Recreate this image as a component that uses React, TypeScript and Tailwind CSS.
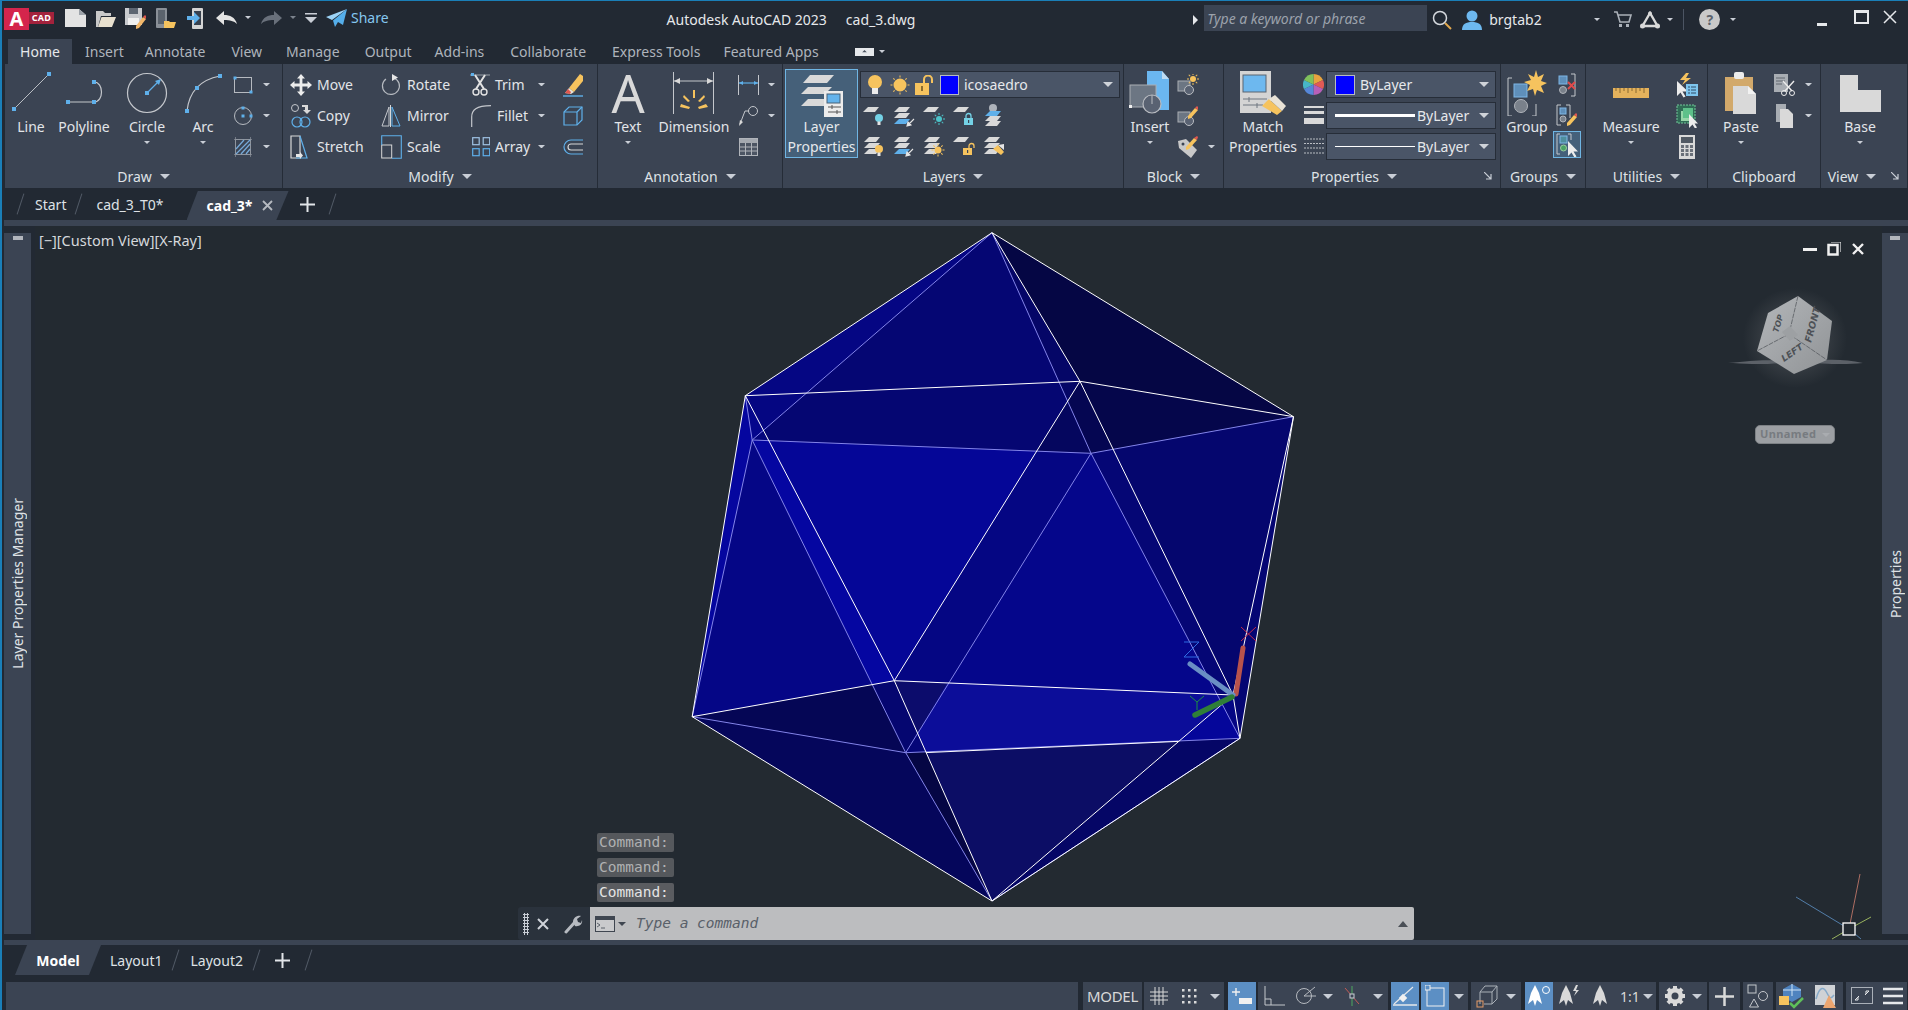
import React from 'react';

const G = '#d9d9d9';
const B = '#5fb0ea';
const Y = '#f6c35e';

type Kids = { children?: React.ReactNode };

const Ico = ({ w, h = w, children, className }: { w: number; h?: number; className?: string } & Kids) => (
  <svg width={w} height={h} viewBox={`0 0 ${w} ${h}`} className={className} fill="none">
    {children}
  </svg>
);

const Caret = ({ c = '#c9ced6', s = 4, className = '' }: { c?: string; s?: number; className?: string }) => (
  <svg width={s * 2} height={s} viewBox="0 0 8 4" preserveAspectRatio="none" className={`shrink-0 ${className}`}>
    <path d="M0 0h8L4 4z" fill={c} />
  </svg>
);

const Handle = ({ x, y, s = 4, c = B }: { x: number; y: number; s?: number; c?: string }) => (
  <rect x={x - s / 2} y={y - s / 2} width={s} height={s} fill={c} />
);

/* ---------- Quick access icons ---------- */
const NewFile = () => (
  <Ico w={21} h={20}>
    <path d="M0 1h14l7 6v12H0z" fill="#e3e3e3" />
    <path d="M14 1v6h7z" fill="#9da3aa" />
  </Ico>
);
const OpenFile = () => (
  <Ico w={21} h={20}>
    <path d="M1 19V3h7l2 2h6v3H6L3 19z" fill="#c9c9c9" />
    <path d="M3 19L6.500 9H21l-4 10z" fill="#e8e0cf" />
  </Ico>
);
const SaveIcon = () => (
  <Ico w={21} h={22}>
    <path d="M0 1h17v17H0z" fill="#c9cbcf" />
    <rect x="4" y="1" width="9" height="6" fill="#5d6672" />
    <rect x="3" y="11" width="11" height="7" fill="#f0f0f0" />
    <path d="M11 19l7-9 3 2-7 9-3 1z" fill="#f2b76a" />
    <path d="M18 10l3 2 0-3-1-1z" fill="#e0574f" />
  </Ico>
);
const PhoneFolder = () => (
  <Ico w={22} h={22}>
    <rect x="1" y="1" width="11" height="20" rx="1" fill="#8a9098" />
    <rect x="3" y="3" width="7" height="14" fill="#5b636d" />
    <path d="M9 14h5l1 1h6l-2 6H9z" fill={Y} />
  </Ico>
);
const PhoneShare = () => (
  <Ico w={20} h={22}>
    <rect x="6" y="1" width="11" height="21" rx="1" fill="#d4d4d4" />
    <rect x="8" y="4" width="7" height="14" fill="#38414e" />
    <path d="M1 9h7V5l6 6-6 6v-4H1z" fill={B} />
  </Ico>
);
const Undo = ({ c = '#e3e3e3' }: { c?: string }) => (
  <Ico w={21} h={14}>
    <path d="M8 0v4c6 0 11 2 13 9-3-3-7-4-13-4v5L0 7z" fill={c} />
  </Ico>
);
const Redo = ({ c = '#69707b' }: { c?: string }) => (
  <Ico w={21} h={14}>
    <path d="M13 0v4C7 4 2 6 0 13c3-3 7-4 13-4v5l8-7z" fill={c} />
  </Ico>
);
const Plane = () => (
  <Ico w={21} h={18}>
    <path d="M21 0L0 8l6 3z" fill="#9cd3f7" />
    <path d="M21 0L7 11.500l2 6.500 3-5 5 3z" fill="#55aeea" />
  </Ico>
);

/* ---------- Ribbon: draw ---------- */
const LineIcon = () => (
  <Ico w={42} h={40}>
    <path d="M3 38L38 3" stroke="#b9bdc3" strokeWidth="1" />
    <Handle x={3} y={38} />
    <Handle x={38} y={3} />
  </Ico>
);
const PolyIcon = () => (
  <Ico w={44} h={32}>
    <path d="M4 28h26M30 8c10 0 10 20 0 20" stroke="#c4c7cc" strokeWidth="1.200" />
    <Handle x={4} y={28} />
    <Handle x={30} y={28} />
    <Handle x={30} y={8} />
  </Ico>
);
const CircleIcon = () => (
  <Ico w={44} h={42}>
    <circle cx="22" cy="21" r="19.500" stroke="#c4c7cc" strokeWidth="1.200" />
    <path d="M22 21L34 9" stroke={B} strokeWidth="1.200" />
    <path d="M36 7l-6 2 4 4z" fill={B} />
    <Handle x={22} y={21} />
  </Ico>
);
const ArcIcon = () => (
  <Ico w={38} h={40}>
    <path d="M3 38C5 20 15 7 36 3" stroke="#c4c7cc" strokeWidth="1.200" />
    <Handle x={3} y={38} />
    <Handle x={13} y={15} />
    <Handle x={36} y={3} />
  </Ico>
);
const RectIcon = () => (
  <Ico w={20} h={18}>
    <rect x="1.500" y="1.500" width="17" height="15" stroke="#b6bac0" />
    <Handle x={2} y={2} s={3} />
    <Handle x={18} y={16} s={3} />
  </Ico>
);
const EllipseIcon = () => (
  <Ico w={20} h={20}>
    <circle cx="10" cy="10" r="8.500" stroke="#b6bac0" />
    <Handle x={10} y={10} s={3} />
    <Handle x={10} y={2} s={3} />
    <Handle x={18} y={10} s={3} />
  </Ico>
);
const HatchIcon = () => (
  <Ico w={20} h={20}>
    <rect x="2.500" y="2.500" width="15" height="15" stroke="#9aa0a8" />
    <path d="M1 2.500h18M1 17.500h18M2.500 0v20M17.500 0v20" stroke="#8b919a" strokeWidth=".7" />
    <path d="M3 12l8-9M3 17l14-14M8 17l9-10M13 17l4-5" stroke="#76a9d8" strokeWidth="1.300" />
  </Ico>
);

/* ---------- Ribbon: modify ---------- */
const MoveIcon = () => (
  <Ico w={22} h={22}>
    <path
      d="M11 0l4 4.500h-2.600v5.100h5.100V7L22 11l-4.500 4v-2.600h-5.100v5.100H15L11 22l-4-4.500h2.600v-5.100H4.500V15L0 11l4.500-4v2.600h5.100V4.500H7z"
      fill="#ececec"
    />
  </Ico>
);
const RotateIcon = () => (
  <Ico w={20} h={22}>
    <path d="M13 4a8.500 8.500 0 1 1-8 1" stroke="#b6bac0" strokeWidth="1.200" />
    <path d="M11 0v7l6-3.500z" fill="#e6e6e6" />
  </Ico>
);
const TrimIcon = () => (
  <Ico w={22} h={24}>
    <path d="M0 2h20" stroke="#9aa0a8" />
    <path d="M5 2l9 14M15 2L6 16" stroke="#e3e3e3" strokeWidth="2" />
    <circle cx="6" cy="19" r="3" stroke="#e3e3e3" strokeWidth="1.400" />
    <circle cx="14" cy="19" r="3" stroke="#e3e3e3" strokeWidth="1.400" />
    <rect x="1" y="0" width="3" height="3" fill={B} />
  </Ico>
);
const EraseIcon = () => (
  <Ico w={20} h={24}>
    <path d="M6 15L17 1l3 2v5l-9 11z" fill={Y} />
    <path d="M2 20l4-5 5 4-3 2z" fill="#e8e2d6" />
    <path d="M2 20l3-4 3 3-1 2z" fill="#e0574f" />
    <path d="M0 23h20" stroke={B} strokeWidth="1.400" />
  </Ico>
);
const CopyIcon = () => (
  <Ico w={22} h={24}>
    <circle cx="5" cy="4" r="3.500" stroke="#c4c7cc" />
    <path d="M12 1h6v5h3l-4 4-4-4h2V3h-3z" fill="#d8d8d8" />
    <circle cx="7" cy="18" r="5" stroke={B} strokeWidth="1.200" />
    <circle cx="15" cy="18" r="5" stroke={B} strokeWidth="1.200" />
  </Ico>
);
const MirrorIcon = () => (
  <Ico w={20} h={22}>
    <path d="M8 2L1 21h7z" stroke="#c4c7cc" />
    <path d="M11 2l8 19h-8z" stroke={B} />
    <path d="M9.500 0v22" stroke="#d8d8d8" />
  </Ico>
);
const FilletIcon = () => (
  <Ico w={20} h={22}>
    <path d="M.7 22V12C.7 5 5 .7 20 .7" stroke="#c4c7cc" strokeWidth="1.200" />
  </Ico>
);
const SolidIcon = () => (
  <Ico w={20} h={22}>
    <path d="M1 7l5-5h13v13l-5 5H1z" stroke={B} strokeWidth="1.200" />
    <path d="M1 7h13v13M14 7l5-5" stroke={B} strokeWidth="1.200" />
  </Ico>
);
const StretchIcon = () => (
  <Ico w={22} h={24}>
    <path d="M1 1h9v22H1z" stroke="#d8d8d8" strokeWidth="1.200" />
    <path d="M10 1l7 22H6" stroke={B} strokeWidth="1.200" />
    <path d="M6 19l4 0 0-2 3 3.500-3 3.500 0-2H6z" fill="#e6e6e6" />
  </Ico>
);
const ScaleIcon = () => (
  <Ico w={21} h={24}>
    <rect x=".7" y="10" width="10" height="13" stroke="#d8d8d8" />
    <path d="M.7 10V.7h19.600v22.600H11" stroke={B} strokeWidth="1.100" />
  </Ico>
);
const ArrayIcon = () => (
  <Ico w={18} h={20}>
    {[0, 10.5].map(x =>
      [0, 11].map(y => <rect key={`${x}${y}`} x={x + 0.7} y={y + 0.7} width="6.500" height="7" stroke={y ? B : '#9fc3e4'} strokeWidth="1.200" />),
    )}
  </Ico>
);
const OffsetIcon = () => (
  <Ico w={20} h={16}>
    <path d="M20 1H8a7 7 0 0 0 0 14h12" stroke={B} strokeWidth="1.200" />
    <path d="M20 5H8a3 3 0 0 0 0 6h12" stroke="#d8d8d8" strokeWidth="1.200" />
  </Ico>
);

/* ---------- Ribbon: annotation ---------- */
const DimensionIcon = () => (
  <Ico w={42} h={42}>
    <path d="M.5 0v42M40.500 0v42" stroke="#c4c7cc" />
    <path d="M1 9h39" stroke="#c4c7cc" />
    <path d="M1 9l6-3v6zM40 9l-6-3v6z" fill="#d8d8d8" />
    <path d="M20 18h2v8h-2zM8 32l9 3-1 2-9-2zM33 32l-8 3 1 2 9-2zM11 23l6 6-2 1-5-5zM31 23l-6 6 2 1 5-5z" fill={Y} />
  </Ico>
);
const LinearIcon = () => (
  <Ico w={21} h={22}>
    <path d="M.5 1v20M20.500 1v20" stroke="#c4c7cc" />
    <path d="M1 9h19" stroke={B} strokeWidth="1.200" />
    <path d="M1 9l4-2v4zM20 9l-4-2v4z" fill={B} />
  </Ico>
);
const LeaderIcon = () => (
  <Ico w={21} h={22}>
    <circle cx="15" cy="6" r="4.500" stroke="#c4c7cc" />
    <path d="M11 6H7L2 19" stroke="#c4c7cc" />
    <path d="M1 21l1-6 3 2z" fill="#d8d8d8" />
  </Ico>
);
const TableIcon = () => (
  <Ico w={19} h={18}>
    <rect x=".5" y=".5" width="18" height="17" stroke="#b0b4ba" fill="#4c5563" />
    <rect x="1" y="1" width="17" height="4" fill="#a4a9b0" />
    <path d="M1 9h17M1 13h17M6.500 5v12M12.500 5v12" stroke="#b0b4ba" />
  </Ico>
);

/* ---------- Ribbon: layers ---------- */
const Sheet = ({ x = 0, y = 0, c = G }: { x?: number; y?: number; c?: string }) => (
  <path d={`M${x + 5} ${y}h11l-4 5H${x}z`} fill={c} />
);
const Stack = ({ top = G, mid = G, bot = G }: { top?: string; mid?: string; bot?: string }) => (
  <>
    <Sheet x={2} y={3} c={top} />
    <Sheet x={2} y={9} c={mid} />
    <Sheet x={2} y={15} c={bot} />
  </>
);
const Bulb = ({ x, y, c, s = 1 }: { x: number; y: number; c: string; s?: number }) => (
  <g transform={`translate(${x} ${y}) scale(${s})`}>
    <circle cx="4" cy="4" r="4" fill={c} />
    <rect x="2.500" y="7.500" width="3" height="3.500" fill="#e3e3e3" />
  </g>
);
const Lock = ({ x, y, c, open }: { x: number; y: number; c: string; open?: boolean }) => (
  <g transform={`translate(${x} ${y})`}>
    <path d={open ? 'M6 5V3a2.500 2.500 0 0 1 5 0v2' : 'M2 5V3a2.500 2.500 0 0 1 5 0v2'} stroke={c} strokeWidth="1.300" />
    <rect x="0" y="5" width="9" height="7" fill={c} />
    <rect x="4" y="7" width="1.200" height="3" fill="#3b4453" />
  </g>
);
const Sun = ({ x, y, r = 4, c = Y }: { x: number; y: number; r?: number; c?: string }) => (
  <g>
    <circle cx={x} cy={y} r={r} fill={c} />
    {[0, 45, 90, 135, 180, 225, 270, 315].map(a => (
      <rect key={a} x={x - 0.5} y={y - r - 3} width="1" height="2" fill={c} transform={`rotate(${a} ${x} ${y})`} />
    ))}
  </g>
);
const SmallArrow = ({ x, y, c = '#e6e6e6' }: { x: number; y: number; c?: string }) => (
  <path d={`M${x} ${y}l7-7M${x} ${y}l1-4 3 3z`} stroke={c} fill={c} strokeWidth="1.100" />
);

const layerIcons: React.ReactNode[] = [
  <><Sheet x={1} y={3} /><Bulb x={13} y={10} c="#74d2e6" /></>,
  <><Stack mid={G} bot={B} /><SmallArrow x={15} y={22} /></>,
  <><Sheet x={1} y={3} /><Sun x={17} y={15} r={3} c="#4cc3c9" /></>,
  <><Sheet x={1} y={3} /><Lock x={12} y={9} c="#74d2e6" /></>,
  <><circle cx="11" cy="4" r="4" fill="#aeb3ba" /><Sheet x={3} y={7} c={B} /><Sheet x={3} y={12} /><Sheet x={3} y={17} /></>,
  <><Stack /><Bulb x={13} y={11} c={Y} /></>,
  <><Stack mid={G} bot={B} /><SmallArrow x={14} y={22} /></>,
  <><Stack /><Sun x={16} y={16} r={3.5} /></>,
  <><Sheet x={1} y={3} /><Lock x={11} y={9} c={Y} open /></>,
  <><Stack /><path d="M11 15l5-4 6 7-3 3z" fill={Y} /><path d="M16 11l6 5 0-6z" fill="#e6e6e6" /></>,
];

const LayerPropsIcon = () => (
  <Ico w={42} h={44}>
    <path d="M9 2h24l-7 8H2z" fill={G} />
    <path d="M7 14h24l-7 7H0z" fill={G} />
    <path d="M7 26h24l-7 7H0z" fill={G} />
    <rect x="23" y="18" width="19" height="26" fill="#ececec" />
    <rect x="26" y="21" width="13" height="9" fill="#63b3ec" stroke="#476176" />
    <path d="M27 34h13M27 39h13" stroke="#555" />
    <path d="M31 32v4M36 37v4" stroke="#555" />
  </Ico>
);

const InsertIcon = () => (
  <Ico w={42} h={44}>
    <path d="M18 0h15l7 8v31H18z" fill="#6bb7f0" />
    <path d="M33 0v8h7z" fill="#bfdcf2" />
    <rect x="1" y="14" width="26" height="22" fill="#6c7683" stroke="#a9adb3" />
    <circle cx="23" cy="33" r="9" fill="#596272" stroke="#b9bcc1" strokeWidth="1.200" />
    <path d="M23 24v9" stroke="#b9bcc1" />
    <rect x="0" y="34" width="3" height="3" fill="#f0f0f0" />
  </Ico>
);
const BlockStar = () => (
  <Ico w={22} h={22}>
    <rect x="1" y="7" width="12" height="10" fill="#6c7683" stroke="#a9adb3" />
    <circle cx="12" cy="16" r="4.500" fill="#596272" stroke="#b9bcc1" />
    <Sun x={16} y={5} r={3} />
  </Ico>
);
const BlockPen = () => (
  <Ico w={22} h={22}>
    <rect x="1" y="7" width="12" height="10" fill="#6c7683" stroke="#a9adb3" />
    <circle cx="12" cy="16" r="4.500" fill="#596272" stroke="#b9bcc1" />
    <path d="M11 11l7-8 3 2-7 8-3 1z" fill={Y} />
    <path d="M18 3l3 2 0-3-1-1z" fill="#e0574f" />
  </Ico>
);
const TagIcon = () => (
  <Ico w={22} h={24}>
    <path d="M1 6l8-2 11 11-6 8L2 13z" fill="#c9c9c9" />
    <circle cx="6" cy="9" r="1.500" fill="#3b4453" />
    <path d="M9 12l8-9 3 2-8 9-3 1z" fill={Y} />
    <path d="M17 3l3 2 1-3-1-1z" fill="#e0574f" />
  </Ico>
);

/* ---------- Ribbon: properties ---------- */
const MatchIcon = () => (
  <Ico w={46} h={44}>
    <rect x="0" y="0" width="31" height="42" fill="#d4d4d4" />
    <rect x="3" y="4" width="23" height="17" fill="#6db8ef" stroke="#5a6470" />
    <path d="M3 28h24M3 34h20" stroke="#6f7680" />
    <path d="M9 26v5M17 32v5" stroke="#6f7680" />
    <path d="M22 35l7-7 13 12-5 4z" fill={Y} />
    <path d="M29 28l6-4 11 11-4 5z" fill="#e8e2d6" />
  </Ico>
);
const Wheel = () => (
  <Ico w={21} h={21}>
    <path d="M10.500 10.500V0A10.500 10.500 0 0 1 20 6z" fill="#e8a33e" />
    <path d="M10.500 10.500L20 6a10.500 10.500 0 0 1 0 9z" fill="#e25a55" />
    <path d="M10.500 10.500L20 15a10.500 10.500 0 0 1-9.500 6z" fill="#b75fb8" />
    <path d="M10.500 10.500V21A10.500 10.500 0 0 1 1 15z" fill="#5687d8" />
    <path d="M10.500 10.500L1 15a10.500 10.500 0 0 1 0-9z" fill="#47b7c8" />
    <path d="M10.500 10.500L1 6a10.500 10.500 0 0 1 9.500-6z" fill="#7fc15c" />
  </Ico>
);
const Weights = () => (
  <Ico w={20} h={20}>
    <rect y="0" width="20" height="2" fill={G} />
    <rect y="5" width="20" height="3" fill={G} />
    <rect y="12" width="20" height="6" fill={G} />
  </Ico>
);
const LineTypes = () => (
  <Ico w={20} h={18}>
    <path d="M0 1h20M0 5.500h20M0 10h20M0 15h20" stroke="#b9bdc3" strokeDasharray="2 1" />
  </Ico>
);

/* ---------- Ribbon: groups / utilities / clipboard ---------- */
const GroupIcon = () => (
  <Ico w={40} h={46}>
    <path d="M5 8H1v38h4M25 46h4V34" stroke="#c4c7cc" />
    <rect x="7" y="14" width="13" height="13" fill="#5f8fba" stroke="#7eb6e6" />
    <circle cx="14" cy="36" r="6.500" fill="#7a818b" stroke="#b0b4ba" />
    <path d="M29 0l2 7 6-3-3 7 6 2-6 3 3 7-7-3-2 6-2-7-6 2 3-6-6-3 7-2-3-6 6 3z" fill={Y} />
  </Ico>
);
const GroupX = () => (
  <Ico w={20} h={24}>
    <path d="M14 1h4v22h-4" stroke="#c4c7cc" />
    <rect x="2" y="3" width="8" height="8" fill="#5f8fba" stroke="#7eb6e6" />
    <circle cx="6" cy="17" r="3.500" fill="#7a818b" stroke="#b0b4ba" />
    <path d="M11 9l7 7M18 9l-7 7" stroke="#e04a4a" strokeWidth="2" />
  </Ico>
);
const GroupPen = () => (
  <Ico w={22} h={24}>
    <path d="M5 1H1v20h4M10 1h4v13" stroke="#c4c7cc" />
    <rect x="4" y="4" width="6" height="6" fill="#5f8fba" stroke="#7eb6e6" />
    <circle cx="7" cy="15" r="3" fill="#7a818b" stroke="#b0b4ba" />
    <path d="M11 19l7-8 3 2-7 8-3 1z" fill={Y} />
    <path d="M18 11l3 2 0-3-1-1z" fill="#e0574f" />
  </Ico>
);
const GroupPick = () => (
  <Ico w={22} h={24}>
    <path d="M4 1H1v20h3M12 1h3v6" stroke="#c4c7cc" />
    <rect x="4" y="3" width="7" height="7" fill="#4f8f9e" stroke="#7eb6e6" />
    <circle cx="7.500" cy="15" r="3" fill="#4aa365" stroke="#9acb9f" />
    <path d="M12 8v15l3.500-3.500 3 5 2-1-3-5H22z" fill="#ececec" />
  </Ico>
);
const RulerIcon = () => (
  <Ico w={36} h={12}>
    <rect y="1" width="36" height="10" fill="#e4b25c" />
    <path d="M3 1v3M7 1v5M11 1v3M15 1v5M19 1v3M23 1v5M27 1v3M31 1v5" stroke="#8a6b30" />
  </Ico>
);
const QuickSelect = () => (
  <Ico w={22} h={26}>
    <path d="M10 1L4 8h5l-3 5 9-7h-5l3-5z" fill={Y} />
    <path d="M1 9v15l3.500-3.500 3 5 2-1-3-5H12z" fill="#ececec" />
    <rect x="10" y="12" width="12" height="12" fill="#7ec6ef" />
    <path d="M12 15h2M15 15h5M12 18h2M15 18h5M12 21h2M15 21h5" stroke="#2f4c66" />
  </Ico>
);
const SelectAll = () => (
  <Ico w={22} h={24}>
    <rect x="1" y="1" width="18" height="18" fill="#2f6b55" stroke="#72c89a" strokeDasharray="2 1" />
    <rect x="5" y="7" width="10" height="10" fill="#97d6a9" />
    <rect x="7" y="4" width="10" height="10" fill="#5ec08a" />
    <path d="M13 10v14l3.500-3.500 2.500 4 2-1-2.500-4H22z" fill="#ececec" />
  </Ico>
);
const CalcIcon = () => (
  <Ico w={16} h={24}>
    <rect width="16" height="24" fill={G} />
    <rect x="2" y="2" width="12" height="6" fill="#515963" />
    {[10, 14, 18].map(y => [2, 6.5, 11].map(x => <rect key={`${x}${y}`} x={x} y={y} width="3" height="3" fill="#6a7079" />))}
  </Ico>
);
const PasteIcon = () => (
  <Ico w={32} h={42}>
    <path d="M0 5h28v34H0z" fill="#d2a96b" />
    <rect x="9" y="0" width="10" height="7" rx="2" fill="#ececec" />
    <path d="M8 14h15l8 8v20H8z" fill={G} />
    <path d="M23 14v8h8z" fill="#f2f2f2" />
  </Ico>
);
const CutIcon = () => (
  <Ico w={22} h={24}>
    <path d="M0 1h14v18H0z" fill="#a8adb3" />
    <path d="M2 5h9M2 8h9M2 11h6" stroke="#60676f" />
    <path d="M9 8l9 10M20 8l-9 10" stroke="#ececec" strokeWidth="1.400" />
    <circle cx="10" cy="20" r="2.500" stroke="#ececec" />
    <circle cx="18" cy="20" r="2.500" stroke="#ececec" />
  </Ico>
);
const CopyClip = () => (
  <Ico w={18} h={24}>
    <path d="M0 0h10v18H0z" fill="#a8adb3" />
    <path d="M4 5h8l5 5v14H4z" fill={G} />
  </Ico>
);
const BaseIcon = () => (
  <Ico w={41} h={37}>
    <path d="M0 0h18v15h23v22H0z" fill={G} />
  </Ico>
);

/* ---------- Ribbon parts ---------- */
const Panel = ({ w, title, launcher, noCaret, shift = '', children }: { w: string; title: string; launcher?: boolean; noCaret?: boolean; shift?: string } & Kids) => (
  <div className={`${w} shrink-0 relative flex flex-col border-r border-[#252c37]`}>
    <div className="h-[101px] pt-[5px] flex">{children}</div>
    <div className={`h-[23px] flex items-center justify-center gap-[8px] text-[14px] text-[#dfe2e6] ${shift}`}>
      <span>{title}</span>
      {!noCaret && <Caret s={5} />}
    </div>
    {launcher && (
      <svg width="8" height="8" viewBox="0 0 8 8" className="absolute right-[8px] bottom-[8px]">
        <path d="M0 0l7 7M7 2v5H2" stroke="#c9ced6" strokeWidth="1.200" fill="none" />
      </svg>
    )}
  </div>
);

const Large = ({ w, icon, label, caret, pt = '' }: { w: string; icon: React.ReactNode; label: React.ReactNode; caret?: boolean; pt?: string }) => (
  <div className={`${w} shrink-0 flex flex-col items-center text-[14px] text-[#e2e5e9] leading-[20px]`}>
    <div className={`h-[48px] flex items-center justify-center ${pt}`}>{icon}</div>
    <div className="text-center whitespace-nowrap">{label}</div>
    {caret && <Caret s={3} className="mt-[4px]" />}
  </div>
);

const Small = ({ icon, caret, className = '' }: { icon: React.ReactNode; caret?: boolean; className?: string }) => (
  <div className={`h-[31px] flex items-center ${className}`}>
    <div className="w-[22px] flex justify-center items-center">{icon}</div>
    {caret && <Caret s={3.5} className="ml-[9px]" />}
  </div>
);

const ToolRow = ({ icon, label, caret, gap = 'ml-[5px]' }: { icon: React.ReactNode; label: string; caret?: boolean; gap?: string }) => (
  <div className="h-[31px] flex items-center text-[14px] text-[#e2e5e9]">
    <div className="w-[22px] flex justify-center">{icon}</div>
    <span className={gap}>{label}</span>
    {caret && <Caret s={3.5} className="ml-auto mr-[17px]" />}
  </div>
);

const Combo = ({ children, w = 'w-[170px]' }: { w?: string } & Kids) => (
  <div className={`${w} h-[27px] flex items-center bg-[#4a5567] border border-[#262d38] pr-[6px] text-[14px] text-[#e6e8eb]`}>
    {children}
    <Caret s={5} c="#cfd3d9" className="ml-auto" />
  </div>
);

const Ribbon = () => (
  <div className="h-[124px] ml-[3px] flex bg-[#3b4453]">
    <Panel w="w-[278px]" title="Draw">
      <Large w="w-[52px]" icon={<LineIcon />} label="Line" pt="pb-[4px] pl-[2px]" />
      <Large w="w-[54px]" icon={<PolyIcon />} label="Polyline" pt="pb-[7px] pl-[3px]" />
      <Large w="w-[72px]" icon={<CircleIcon />} label="Circle" caret />
      <Large w="w-[40px]" icon={<ArcIcon />} label="Arc" caret />
      <div className="ml-[9px]">
        <Small icon={<RectIcon />} caret />
        <Small icon={<EllipseIcon />} caret />
        <Small icon={<HatchIcon />} caret />
      </div>
    </Panel>
    <Panel w="w-[315px]" title="Modify">
      <div className="w-[97px] pl-[7px]">
        <ToolRow icon={<MoveIcon />} label="Move" />
        <ToolRow icon={<CopyIcon />} label="Copy" />
        <ToolRow icon={<StretchIcon />} label="Stretch" />
      </div>
      <div className="w-[90px]">
        <ToolRow icon={<RotateIcon />} label="Rotate" />
        <ToolRow icon={<MirrorIcon />} label="Mirror" />
        <ToolRow icon={<ScaleIcon />} label="Scale" />
      </div>
      <div className="w-[92px]">
        <ToolRow icon={<TrimIcon />} label="Trim" caret gap="ml-[3px]" />
        <ToolRow icon={<FilletIcon />} label="Fillet" caret gap="ml-[5px]" />
        <ToolRow icon={<ArrayIcon />} label="Array" caret gap="ml-[3px]" />
      </div>
      <div>
        <Small icon={<EraseIcon />} />
        <Small icon={<SolidIcon />} />
        <Small icon={<OffsetIcon />} />
      </div>
    </Panel>
    <Panel w="w-[185px]" title="Annotation">
      <Large w="w-[60px]" icon={<span className="text-[52px] leading-[48px] text-[#d9d9d9]">A</span>} label="Text" caret />
      <Large w="w-[72px]" icon={<DimensionIcon />} label="Dimension" />
      <div className="ml-[7px]">
        <Small icon={<LinearIcon />} caret />
        <Small icon={<LeaderIcon />} caret />
        <Small icon={<TableIcon />} />
      </div>
    </Panel>
    <Panel w="w-[341px]" title="Layers">
      <div className="w-[73px] h-[89px] ml-[2px] flex flex-col items-center border border-[#6fb5e3] bg-[#456079] text-[14px] leading-[20px] text-[#e6e9ec]">
        <div className="h-[48px] pt-[2px] flex items-center"><LayerPropsIcon /></div>
        <div className="text-center mt-[-1px]">Layer<br />Properties</div>
      </div>
      <div className="ml-[2px] mt-[2px]">
        <Combo w="w-[260px]">
          <div className="flex items-center ml-[7px]">
            <svg width="14" height="20" viewBox="0 0 14 20"><circle cx="7" cy="7" r="7" fill={Y} /><rect x="4" y="13" width="6" height="6" fill="#ececec" /></svg>
            <Ico w={20} h={22} className="ml-[8px]"><Sun x={10} y={11} r={6.5} /></Ico>
            <Ico w={18} h={20} className="ml-[5px]">
              <path d="M9 8V4.500a4 4 0 0 1 8 0V8" stroke={Y} strokeWidth="2" />
              <rect y="8" width="14" height="12" fill={Y} />
              <rect x="6" y="11" width="2" height="5" fill="#8a6b30" />
            </Ico>
            <div className="w-[17px] h-[18px] ml-[7px] bg-[#0000ff] border border-[#b6bac0] box-content" />
            <span className="ml-[5px]">icosaedro</span>
          </div>
        </Combo>
        <div className="grid grid-cols-5 w-[150px] h-[30px] mt-[3px] ml-[2px] items-center">
          {layerIcons.slice(0, 5).map((n, i) => <Ico key={i} w={24} h={24}>{n}</Ico>)}
        </div>
        <div className="grid grid-cols-5 w-[150px] h-[30px] ml-[2px] items-center">
          {layerIcons.slice(5).map((n, i) => <Ico key={i} w={24} h={24}>{n}</Ico>)}
        </div>
      </div>
    </Panel>
    <Panel w="w-[100px]" title="Block">
      <Large w="w-[52px]" icon={<InsertIcon />} label="Insert" caret />
      <div className="ml-[1px]">
        <Small icon={<BlockStar />} />
        <Small icon={<BlockPen />} />
        <Small icon={<TagIcon />} caret />
      </div>
    </Panel>
    <Panel w="w-[277px]" title="Properties" launcher shift="pr-[16px]">
      <Large w="w-[78px]" icon={<MatchIcon />} label={<>Match<br />Properties</>} />
      <div className="w-[23px]">
        <div className="h-[31px] flex items-center justify-center"><Wheel /></div>
        <div className="h-[31px] flex items-center justify-center"><Weights /></div>
        <div className="h-[31px] flex items-center justify-center"><LineTypes /></div>
      </div>
      <div className="flex flex-col gap-[4px] ml-[1px] mt-[2px]">
        <Combo>
          <div className="w-[18px] h-[18px] ml-[8px] bg-[#0000ff] border border-[#b6bac0] box-content" />
          <span className="ml-[5px]">ByLayer</span>
        </Combo>
        <Combo>
          <div className="w-[80px] h-[3px] ml-[8px] bg-white" />
          <span className="ml-[2px]">ByLayer</span>
        </Combo>
        <Combo>
          <div className="w-[80px] h-px ml-[8px] bg-white" />
          <span className="ml-[2px]">ByLayer</span>
        </Combo>
      </div>
    </Panel>
    <Panel w="w-[85px]" title="Groups">
      <Large w="w-[52px]" icon={<GroupIcon />} label="Group" />
      <div className="ml-[3px]">
        <Small icon={<GroupX />} />
        <Small icon={<GroupPen />} />
        <div className="w-[28px] h-[27px] ml-[-3px] flex items-center justify-center border border-[#6fb5e3] bg-[#45607a]"><GroupPick /></div>
      </div>
    </Panel>
    <Panel w="w-[122px]" title="Utilities">
      <Large w="w-[90px]" icon={<RulerIcon />} label="Measure" caret />
      <div>
        <Small icon={<QuickSelect />} />
        <Small icon={<SelectAll />} />
        <Small icon={<CalcIcon />} />
      </div>
    </Panel>
    <Panel w="w-[113px]" title="Clipboard" noCaret>
      <Large w="w-[66px]" icon={<PasteIcon />} label="Paste" caret />
      <div>
        <Small icon={<CutIcon />} caret />
        <Small icon={<CopyClip />} caret />
      </div>
    </Panel>
    <Panel w="w-[87px]" title="View" launcher shift="pr-[24px]">
      <Large w="w-[78px]" icon={<BaseIcon />} label="Base" caret />
    </Panel>
  </div>
);

/* ---------- Top bars ---------- */
const TitleBar = () => (
  <div className="h-[37px] flex items-center text-[14px]">
    <div className="flex items-center mt-[-4px]">
      <div className="w-[25px] h-[22px] ml-[2px] mt-[2px] bg-[#d4254c] flex items-center justify-center text-white font-bold text-[20px]">A</div>
      <div className="w-[25px] h-[12px] bg-[#a3223c] flex items-center justify-center text-white font-bold text-[9px] tracking-[.3px]">CAD</div>
      <div className="ml-[11px]"><NewFile /></div>
      <div className="ml-[9px]"><OpenFile /></div>
      <div className="ml-[9px]"><SaveIcon /></div>
      <div className="ml-[9px]"><PhoneFolder /></div>
      <div className="ml-[9px]"><PhoneShare /></div>
      <div className="ml-[10px]"><Undo /></div>
      <Caret s={3} className="ml-[8px]" />
      <div className="ml-[10px]"><Redo /></div>
      <Caret s={3} c="#7c838d" className="ml-[8px]" />
      <svg width="12" height="10" viewBox="0 0 12 10" className="ml-[9px]"><path d="M0 0h12v1.500H0zM0 4h12L6 10z" fill="#c9ced6" /></svg>
      <div className="ml-[9px]"><Plane /></div>
      <span className="ml-[4px] text-[#85c7f0]">Share</span>
    </div>
    <span className="ml-[278px] text-[#e6e8eb] whitespace-nowrap">Autodesk AutoCAD 2023</span>
    <span className="ml-[19px] text-[#e6e8eb]">cad_3.dwg</span>
    <svg width="5" height="10" viewBox="0 0 5 10" className="ml-[278px]"><path d="M0 0l5 5-5 5z" fill="#e6e8eb" /></svg>
    <div className="w-[223px] h-[26px] ml-[6px] mt-[-3px] bg-[#3b4453] flex items-center pl-[3px] italic text-[#9ba2ac] text-[14px]">Type a keyword or phrase</div>
    <Ico w={20} h={20} className="ml-[5px]">
      <circle cx="8" cy="8" r="6.500" stroke="#d4d8dd" strokeWidth="1.500" />
      <path d="M13 13l6 6" stroke="#e2a84e" strokeWidth="2" />
    </Ico>
    <Ico w={22} h={20} className="ml-[9px]">
      <circle cx="11" cy="6" r="5.500" fill="#6db8ef" />
      <path d="M1 20c0-6 4-8 10-8s10 2 10 8z" fill="#6db8ef" />
    </Ico>
    <span className="ml-[6px] text-[#e6e8eb] w-[105px]">brgtab2</span>
    <Caret s={3} />
    <Ico w={18} h={18} className="ml-[14px]">
      <path d="M0 1h3l3 10h9l2-7H4" stroke="#aab0b8" strokeWidth="1.600" />
      <rect x="5" y="13" width="3" height="3" fill="#aab0b8" />
      <rect x="12" y="13" width="3" height="3" fill="#aab0b8" />
    </Ico>
    <Ico w={20} h={18} className="ml-[8px]">
      <path d="M10 2L2.500 15h15z" stroke="#d9d9d9" strokeWidth="2.400" />
      <circle cx="10" cy="2.500" r="2" fill="#d9d9d9" />
      <circle cx="2.500" cy="15" r="2.500" fill="#d9d9d9" />
      <circle cx="17.500" cy="15" r="2.500" fill="#d9d9d9" />
    </Ico>
    <Caret s={3} className="ml-[7px]" />
    <div className="w-px h-[21px] ml-[10px] bg-[#4c5563]" />
    <div className="w-[21px] h-[21px] ml-[15px] rounded-full bg-[#c9c9c9] flex items-center justify-center text-[#5c636d] font-bold text-[14px]">?</div>
    <Caret s={3} className="ml-[10px]" />
    <div className="w-[10px] h-[3px] ml-[81px] mt-[9px] bg-[#e6e8eb]" />
    <div className="w-[15px] h-[14px] ml-[27px] mt-[-6px] border-2 border-[#e6e8eb] border-t-[3px]" />
    <Ico w={14} h={14} className="ml-[14px] mt-[-6px]"><path d="M1 1l12 12M13 1L1 13" stroke="#e6e8eb" strokeWidth="1.500" /></Ico>
  </div>
);

const ribbonTabs = [
  ['Insert', 'ml-[13px]'], ['Annotate', 'ml-[21px]'], ['View', 'ml-[26px]'], ['Manage', 'ml-[24px]'], ['Output', 'ml-[25px]'],
  ['Add-ins', 'ml-[23px]'], ['Collaborate', 'ml-[26px]'], ['Express Tools', 'ml-[26px]'], ['Featured Apps', 'ml-[23px]'],
];

const RibbonTabs = () => (
  <div className="h-[26px] flex items-end text-[14px] text-[#aeb4bc]">
    <div className="w-[64px] h-[25px] ml-[6px] bg-[#3b4453] flex items-center justify-center text-[#e6e8eb]">Home</div>
    {ribbonTabs.map(([t, m]) => (
      <div key={t} className={`h-[25px] flex items-center ${m}`}>{t}</div>
    ))}
    <div className="h-[25px] flex items-center ml-[36px]">
      <div className="w-[19px] h-[8px] bg-[#e6e8eb] flex items-center justify-center"><Caret s={2.5} c="#4a5260" className="rotate-180" /></div>
      <Caret s={3} className="ml-[5px]" />
    </div>
  </div>
);

const Slash = ({ className = '' }: { className?: string }) => (
  <div className={`w-px h-[22px] bg-[#525a67] rotate-[18deg] shrink-0 ${className}`} />
);

const PlusIcon = () => (
  <Ico w={15} h={15}><path d="M7.500 0v15M0 7.500h15" stroke="#e2e5e9" strokeWidth="2" /></Ico>
);

const DocTabs = () => (
  <div className="h-[32px] flex items-center text-[14px] text-[#dfe2e6]">
    <Slash className="ml-[18px]" />
    <span className="ml-[14px]">Start</span>
    <Slash className="ml-[12px]" />
    <span className="ml-[17px]">cad_3_T0*</span>
    <div className="w-[102px] h-[29px] ml-[23px] self-end bg-[#3b4453] [clip-path:polygon(11%_0,100%_0,88%_100%,0_100%)] flex items-center pl-[20px] shrink-0">
      <span className="font-bold text-white">cad_3*</span>
      <Ico w={11} h={11} className="ml-[10px]"><path d="M1 1l9 9M10 1l-9 9" stroke="#b6bac0" strokeWidth="1.800" /></Ico>
    </div>
    <div className="ml-[11px]"><PlusIcon /></div>
    <Slash className="ml-[17px]" />
  </div>
);

/* ---------- Model space ---------- */
const P: Record<string, [number, number]> = {
  T: [992, 232.7], A: [745.3, 395.7], B: [1080, 381.3], C: [1293.5, 416.7], D: [752.2, 440], E: [1091, 453.3],
  F: [692.2, 716.7], G: [894.3, 680.7], H: [905.7, 752.7], I: [1240, 738.3], J: [1233, 695], K: [992, 901],
};
const pts = (s: string) => s.split('').map(k => P[k].join(',')).join(' ');

const backFaces: [string, number][] = [
  ['TDE', 120], ['TEC', 85], ['TAD', 167], ['DEH', 225], ['EHI', 250], ['EIC', 185], ['ADF', 220], ['DFH', 150], ['FHK', 165], ['HIK', 100],
];
const frontFaces: [string, number][] = [
  ['TAB', 132], ['TBC', 62], ['ABG', 130], ['BGJ', 90], ['BJC', 75], ['CJI', 85], ['FAG', 150], ['FGK', 52], ['GJK', 118], ['JIK', 120],
];
const backEdges = ['TD', 'TE', 'AD', 'DE', 'EC', 'DF', 'DH', 'EH', 'EI', 'FH', 'HK', 'HI', 'IK'];
const frontEdges = ['TA', 'TB', 'TC', 'AB', 'BC', 'AF', 'AG', 'BG', 'BJ', 'CJ', 'CI', 'FG', 'GJ', 'GK', 'JK', 'JI', 'FK', 'IK'];

const Edge = ({ e, c, w }: { e: string; c: string; w: number }) => (
  <line x1={P[e[0]][0]} y1={P[e[0]][1]} x2={P[e[1]][0]} y2={P[e[1]][1]} stroke={c} strokeWidth={w} />
);

const ModelDrawing = () => (
  <svg viewBox="35 226 1847 714" width="1847" height="714" className="absolute left-0 top-0" fill="none">
    {backFaces.map(([f, b]) => (
      <polygon key={f} points={pts(f)} fill={`rgb(0,0,${b})`} fillOpacity=".7" />
    ))}
    {frontFaces.map(([f, b]) => (
      <polygon key={f} points={pts(f)} fill={`rgb(${f === 'GJK' ? 14 : 0},${f === 'GJK' ? 14 : 0},${b})`} fillOpacity=".5" />
    ))}
    <polygon points="894.3,680.7 947,683.5 917.5,733.5" fill="#0c0c6c" />
    {backEdges.map(e => <Edge key={e} e={e} c="#8384ea" w={1} />)}
    {frontEdges.map(e => <Edge key={e} e={e} c="#ffffff" w={1} />)}
    <line x1="926" y1="752.600" x2="1178" y2="741.400" stroke="#fff" strokeWidth="1" />

    {/* ucs */}
    <path d="M1236 694L1243 648" stroke="#b8534c" strokeWidth="5" strokeLinecap="round" />
    <path d="M1233 695L1190 664" stroke="#6a8fc4" strokeWidth="5" strokeLinecap="round" />
    <path d="M1232 697L1195 715" stroke="#2f7f38" strokeWidth="5.500" strokeLinecap="round" />
    <path d="M1241 627l15 14M1256 627l-15 14" stroke="#c22b4a" />
    <path d="M1184 642h15l-15 15h15" stroke="#2f6be0" />
    <path d="M1190 696l7 6 7-6M1197 702v8" stroke="#1d8f45" />

    {/* view cube */}
    <defs>
      <linearGradient id="cube" x1="0" y1="0" x2="1" y2="1">
        <stop offset="0" stopColor="#b4b7ba" />
        <stop offset="1" stopColor="#909396" />
      </linearGradient>
      <radialGradient id="glow">
        <stop offset="0" stopColor="#6e7175" stopOpacity=".6" />
        <stop offset="1" stopColor="#6e7175" stopOpacity="0" />
      </radialGradient>
    </defs>
    <ellipse cx="1795" cy="338" rx="52" ry="50" fill="url(#glow)" />
    <path d="M1728 363c30-3 40-4 65-1h5c30-3 45-3 65 1-20 2-35 1-65-1-30 2-40 3-65 1z" fill="#5c6168" />
    <polygon points="1798,296 1832,321 1827,360 1794,374 1757,351 1768,313" fill="url(#cube)" />
    <path d="M1798 296l-9 38 38 26M1789 334l-32 17" stroke="#585c61" strokeDasharray="5 1" strokeWidth=".8" />
    <polygon points="1782,332 1790,326 1798,335 1790,341" fill="#9da0a3" />
    <text transform="translate(1778 333) rotate(-72)" className="font-['DejaVu_Sans',sans-serif] font-bold italic" fontSize="8" fill="#4d5156">TOP</text>
    <text transform="translate(1811 343) rotate(-75)" className="font-['DejaVu_Sans',sans-serif] font-bold italic" fontSize="9.500" fill="#4d5156">FRONT</text>
    <text transform="translate(1784 362) rotate(-35)" className="font-['DejaVu_Sans',sans-serif] font-bold italic" fontSize="9" fill="#4d5156">LEFT</text>

    {/* wcs icon */}
    <path d="M1849 929L1796 897" stroke="#5e93c8" strokeWidth=".8" />
    <path d="M1849 929L1860 874" stroke="#d17f6e" strokeWidth=".8" />
    <path d="M1849 929L1871 917" stroke="#b6d66a" strokeWidth=".8" />
    <path d="M1849 929L1832 939" stroke="#b6d66a" strokeWidth=".8" />
    <path d="M1849 929L1861 939" stroke="#5e93c8" strokeWidth=".8" />
    <rect x="1843" y="923" width="12" height="12" fill="#232a31" stroke="#fff" strokeWidth="1.300" />
  </svg>
);

const History = ({ bright }: { bright?: boolean }) => (
  <div className={`w-[77px] h-[19px] rounded-[2px] flex items-center pl-[2px] font-['DejaVu_Sans_Mono',monospace] text-[14.5px] ${bright ? 'bg-[#5a5c60] text-[#e4e4e4]' : 'bg-[#55585c] text-[#b0b1b2]'}`}>
    Command:
  </div>
);

const CommandLine = () => (
  <div className="absolute left-[483px] top-[607px]">
    <div className="flex flex-col gap-[6px] ml-[79px] mb-[5px]">
      <History />
      <History />
      <History bright />
    </div>
    <div className="flex">
      <div className="w-[72px] h-[33px] bg-[#2a323c] rounded-l-[3px] flex items-center">
        <div className="ml-[5px] w-[6px] h-[22px] bg-[radial-gradient(#c9ced6_1.1px,transparent_1.3px)] bg-[length:3px_3px]" />
        <Ico w={12} h={12} className="ml-[8px]"><path d="M1 1l10 10M11 1L1 11" stroke="#cfd3d9" strokeWidth="2" /></Ico>
        <Ico w={20} h={20} className="ml-[14px]">
          <path d="M3 18L12 8" stroke="#b6bac0" strokeWidth="3" strokeLinecap="round" />
          <path d="M10 8c0-4 4-7 8-6l-4 3 1 3 3 1 1-3c1 4-3 7-7 6z" fill="#b6bac0" />
        </Ico>
      </div>
      <div className="w-[824px] h-[33px] bg-[#bcbdbf] rounded-r-[2px] flex items-center font-['DejaVu_Sans_Mono',monospace] italic text-[14.5px] text-[#596069]">
        <Ico w={20} h={16} className="ml-[5px]">
          <rect x=".5" y=".5" width="19" height="15" fill="#c9cacc" stroke="#3f4650" />
          <rect width="20" height="4" fill="#3f4650" />
          <path d="M2 7l3 2-3 2M6 12h4" stroke="#3f4650" strokeWidth=".8" />
        </Ico>
        <Caret s={4} c="#3f4650" className="ml-[3px]" />
        <span className="ml-[10px]">Type a command</span>
        <svg width="10" height="6" viewBox="0 0 10 6" className="ml-auto mr-[6px]"><path d="M5 0l5 6H0z" fill="#4a4f56" /></svg>
      </div>
    </div>
  </div>
);

const Grip = () => (
  <div className="h-[4px] w-[10px] mx-auto mt-[3px] bg-[radial-gradient(#b6bac0_.7px,transparent_.9px)] bg-[length:2px_2px]" />
);

const ViewPort = () => (
  <div className="relative flex-1 bg-[#232a31]">
    <ModelDrawing />
    <div className="absolute left-[4px] top-[4px] text-[14.5px] text-[#d5d8dc]">[−][Custom View][X-Ray]</div>
    <div className="absolute left-[1768px] top-[16px] flex items-center">
      <div className="w-[14px] h-[3px] bg-[#f0f0f0]" />
      <Ico w={14} h={14} className="ml-[10px]">
        <path d="M4 0h10v10" stroke="#e8e8e8" strokeWidth="1.200" />
        <rect x="1.500" y="3" width="9" height="9.500" stroke="#f0f0f0" strokeWidth="2.500" />
      </Ico>
      <Ico w={12} h={12} className="ml-[11px]"><path d="M1 1l10 10M11 1L1 11" stroke="#f0f0f0" strokeWidth="2.400" /></Ico>
    </div>
    <div className="absolute left-[1720px] top-[199px] w-[80px] h-[19px] rounded-[5px] bg-[#9c9fa3] border border-[#7d8185] flex items-center pl-[4px] text-[11px] font-bold text-[#777b80] tracking-[.4px]">
      Unnamed
      <Caret s={4} c="#a9acb0" className="ml-[6px]" />
    </div>
    <CommandLine />
  </div>
);

const MainArea = () => (
  <div className="h-[714px] flex">
    <div className="w-[33px] pl-[2px] pt-[7px] pb-[6px] flex">
      <div className="w-[27px] bg-[#3b4453] relative flex items-center justify-center">
        <div className="absolute top-0 inset-x-0"><Grip /></div>
        <span className="[writing-mode:vertical-rl] rotate-180 text-[14px] text-[#dfe2e6] whitespace-nowrap">Layer Properties Manager</span>
      </div>
    </div>
    <ViewPort />
    <div className="w-[26px] pt-[7px] pb-[6px] flex">
      <div className="w-[26px] bg-[#3b4453] relative flex items-center justify-center">
        <div className="absolute top-0 inset-x-0"><Grip /></div>
        <span className="[writing-mode:vertical-rl] rotate-180 text-[14px] text-[#dfe2e6] whitespace-nowrap">Properties</span>
      </div>
    </div>
  </div>
);

const LayoutTabs = () => (
  <div className="h-[37px] flex items-start text-[14px] text-[#dfe2e6]">
    <div className="w-[86px] h-[30px] ml-[13px] bg-[#3b4453] [clip-path:polygon(14%_0,100%_0,86%_100%,0_100%)] flex items-center justify-center font-bold text-white">Model</div>
    <div className="h-[30px] flex items-center">
      <span className="ml-[9px]">Layout1</span>
      <Slash className="ml-[12px]" />
      <span className="ml-[15px]">Layout2</span>
      <Slash className="ml-[13px]" />
      <div className="ml-[18px]"><PlusIcon /></div>
      <Slash className="ml-[18px]" />
    </div>
  </div>
);

/* ---------- Status bar ---------- */
const Seg = ({ w, ml = 'ml-[2px]', children, blue }: { w: string; ml?: string; blue?: boolean } & Kids) => (
  <div className={`${w} ${ml} h-[28px] flex items-center justify-center shrink-0 ${blue ? 'bg-[#5c8fc4]' : 'bg-[#3b4453]'}`}>{children}</div>
);

const Anno = ({ extra }: { extra?: React.ReactNode }) => (
  <Ico w={28} h={22}>
    <path d="M10 0l4 8 3 11-5-4-2 6-2-6-5 4L6 8z" fill="currentColor" />
    {extra}
  </Ico>
);

const StatusBar = () => (
  <div className="h-[28px] flex text-[#d9d9d9]">
    <div className="w-[1072px] h-[28px] ml-[4px] bg-[#3b4453] shrink-0" />
    <Seg w="w-[59px]" ml="ml-[5px]"><span className="text-[15px] tracking-[-.3px]">MODEL</span></Seg>
    <Seg w="w-[80px]">
      <Ico w={20} h={20}><path d="M1 6h18M1 10h18M1 14h18M6 1v18M10 1v18M14 1v18" stroke={G} /></Ico>
      <Ico w={16} h={16} className="ml-[12px]">
        {[1, 7, 13].map(x => [1, 7, 13].map(y => <rect key={`${x}${y}`} x={x} y={y} width="2.500" height="2.500" fill={G} />))}
      </Ico>
      <Caret s={5} className="ml-[13px]" />
    </Seg>
    <Seg w="w-[28px]" ml="ml-[4px]" blue>
      <Ico w={20} h={18}>
        <path d="M4 1v8M0 5h8" stroke="#f0f0f0" strokeWidth="1.400" />
        <rect x="7" y="11" width="13" height="6" fill="#f0f0f0" />
      </Ico>
    </Seg>
    <Seg w="w-[130px]">
      <Ico w={22} h={20}><path d="M1 0v19h20M1 13h6v6" stroke="#c4c7cc" /></Ico>
      <Ico w={22} h={20} className="ml-[9px]">
        <circle cx="9" cy="10" r="7.500" stroke="#b6bac0" />
        <path d="M9 10L20 1M9 10h12" stroke="#b6bac0" />
      </Ico>
      <Caret s={5} className="ml-[6px]" />
      <Ico w={18} h={20} className="ml-[10px]">
        <path d="M9 0v20" stroke="#4fa860" />
        <path d="M2 2l14 16" stroke="#c45a55" />
        <rect x="7" y="8" width="4" height="4" fill="#3b4453" stroke="#c9ced6" />
      </Ico>
      <Caret s={5} className="ml-[12px]" />
    </Seg>
    <Seg w="w-[28px]" ml="ml-[3px]" blue>
      <Ico w={24} h={20}>
        <path d="M1 18L20 1" stroke="#e6e8eb" strokeWidth="1.200" />
        <path d="M0 19h24" stroke="#e6e8eb" strokeWidth="1.500" />
        <rect x="7" y="9" width="6" height="6" fill="#f0f0f0" transform="rotate(45 10 12)" />
      </Ico>
    </Seg>
    <Seg w="w-[28px]" blue>
      <Ico w={20} h={22}>
        <rect x="2" y="3" width="17" height="18" stroke="#f0f0f0" />
        <rect x="0" y="0" width="5" height="5" fill="#5c8fc4" stroke="#f0f0f0" />
      </Ico>
    </Seg>
    <Seg w="w-[19px]" ml="ml-0"><Caret s={5} /></Seg>
    <Seg w="w-[50px]" ml="ml-[3px]">
      <Ico w={22} h={23}>
        <path d="M4 19V7l5-6h12v13l-5 5H8M4 7h12v12M16 7l5-6" stroke="#aab0b8" />
        <rect x="1" y="16" width="6" height="6" stroke="#e59a67" />
      </Ico>
      <Caret s={5} className="ml-[8px]" />
    </Seg>
    <Seg w="w-[28px]" ml="ml-[4px]" blue>
      <span className="text-white"><Anno extra={<circle cx="21" cy="5" r="3.500" stroke="#fff" />} /></span>
    </Seg>
    <Seg w="w-[103px]" ml="ml-0">
      <div className="w-full flex items-center pl-[3px]">
        <span className="text-[#d9d9d9]"><Anno extra={<path d="M20 0l-3 6h3l-2 5 5-6h-3l2-5z" fill="#d9d9d9" />} /></span>
        <span className="ml-[6px] text-[#d9d9d9]"><Ico w={20} h={22}><path d="M10 0l4 8 3 11-5-4-2 6-2-6-5 4L6 8z" fill="currentColor" /></Ico></span>
        <span className="ml-[10px] text-[14px]">1:1</span>
        <Caret s={5} className="ml-[3px]" />
      </div>
    </Seg>
    <Seg w="w-[48px]" ml="ml-[3px]">
      <Ico w={20} h={20}>
        <circle cx="10" cy="10" r="6" stroke={G} strokeWidth="4" />
        {[0, 45, 90, 135].map(a => <rect key={a} x="8" y="0" width="4" height="20" fill={G} transform={`rotate(${a} 10 10)`} />)}
        <circle cx="10" cy="10" r="3.500" fill="#3b4453" />
      </Ico>
      <Caret s={5} className="ml-[7px]" />
    </Seg>
    <Seg w="w-[31px]"><Ico w={19} h={19}><path d="M9.500 0v19M0 9.500h19" stroke={G} strokeWidth="2.500" /></Ico></Seg>
    <Seg w="w-[30px]" ml="ml-[3px]">
      <Ico w={22} h={24}>
        <rect x="1" y="1" width="8" height="8" stroke="#c4c7cc" />
        <circle cx="16" cy="12" r="4.500" stroke="#c4c7cc" />
        <path d="M7 15l4.500 8h-9z" stroke="#c4c7cc" />
      </Ico>
    </Seg>
    <Seg w="w-[67px]" ml="ml-[3px]">
      <Ico w={26} h={26}>
        <path d="M13 1l9 5v8l-9 5-9-5V6z" fill="#4f83bf" />
        <path d="M13 1v12M4 7h18" stroke="#cde2f5" />
        <rect x="0" y="13" width="10" height="9" fill={Y} />
        <path d="M11 20l4 4 9-9" stroke="#5fbf5a" strokeWidth="2.500" />
      </Ico>
      <Ico w={26} h={26} className="ml-[9px]">
        <rect x="1" y="2" width="20" height="20" fill="#cfd2d6" />
        <path d="M2 16C6 2 10 4 13 10s4 6 7 2" stroke="#85a9c9" strokeWidth="1.500" />
        <path d="M15 12l7 13H9z" fill="#eca56f" />
      </Ico>
    </Seg>
    <Seg w="w-[61px]" ml="ml-[3px]">
      <Ico w={22} h={18}>
        <rect x=".5" y=".5" width="21" height="16" stroke="#aab0b8" />
        <path d="M4 13l4-4M4 13h3v-3M18 4l-4 4M18 4h-3v3" stroke="#e6e8eb" />
      </Ico>
      <Ico w={20} h={18} className="ml-[10px]"><path d="M0 2h20M0 9h20M0 16h20" stroke="#e6e8eb" strokeWidth="2.500" /></Ico>
    </Seg>
  </div>
);

export default function App() {
  return (
    <div className="w-[1908px] h-[1010px] overflow-hidden bg-[#222933] border-l-2 border-[#1a7fb8] font-['Noto_Sans',sans-serif]">
      <div className="h-px bg-[#1a7fb8]" />
      <TitleBar />
      <RibbonTabs />
      <Ribbon />
      <DocTabs />
      <div className="h-[6px] ml-[2px] bg-[#3b4453]" />
      <MainArea />
      <div className="h-[5px] ml-[2px] bg-[#3b4453]" />
      <LayoutTabs />
      <StatusBar />
    </div>
  );
}
